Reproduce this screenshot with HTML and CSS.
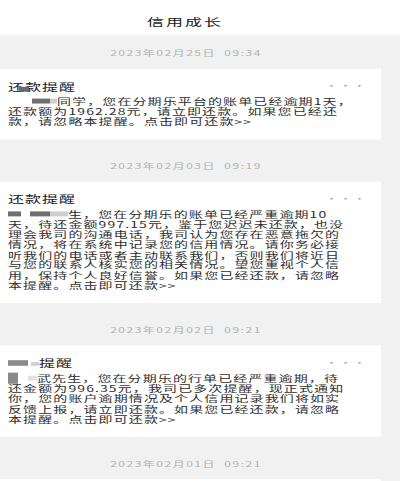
FILE: index.html
```html
<!DOCTYPE html>
<html lang="zh-CN">
<head>
<meta charset="utf-8">
<title>信用成长</title>
<link rel="stylesheet" href="styles.css">
</head>
<body>
<div class="page">
  <header class="topbar"><h1 class="topbar-title">信用成长</h1></header>

  <div class="stamp stamp-first">2023年02月25日&nbsp; 09:34</div>
  <section class="card">
    <div class="card-head">
      <h2 class="card-title">还款提醒<span class="mask mask-title"></span></h2>
      <span class="more">···</span>
    </div>
    <p class="card-body"><span class="blk blk-indent blk-dark w18"></span><span class="blk blk-light w7"></span>同学，您在分期乐平台的账单已经逾期1天，<br>还款额为1962.28元，请立即还款。如果您已经还<br>款，请忽略本提醒。点击即可还款&gt;&gt;</p>
  </section>

  <div class="stamp">2023年02月03日&nbsp; 09:19</div>
  <section class="card">
    <div class="card-head">
      <h2 class="card-title">还款提醒</h2>
      <span class="more">···</span>
    </div>
    <p class="card-body"><span class="blk blk-dark w13"></span><span class="blk blk-dark w20 gap9"></span><span class="blk blk-light w18"></span>生，您在分期乐的账单已经严重逾期10<br>天，待还金额997.15元，鉴于您迟迟未还款，也没<br>理会我司的沟通电话，我司认为您存在恶意拖欠的<br>情况，将在系统中记录您的信用情况。请你务必接<br>听我们的电话或者主动联系我们，否则我们将近日<br>与您的联系人核实您的相关情况。望您重视个人信<br>用，保持个人良好信誉。如果您已经还款，请忽略<br>本提醒。点击即可还款&gt;&gt;</p>
  </section>

  <div class="stamp">2023年02月02日&nbsp; 09:21</div>
  <section class="card">
    <div class="card-head">
      <h2 class="card-title"><span class="blk blk-mid w20 h9"></span><span class="blk blk-light w8 gap3 h6"></span>提醒</h2>
      <span class="more">···</span>
    </div>
    <p class="card-body"><span class="blk blk-mid w10 tall"></span><span class="blk blk-pale w9 gap10"></span>武先生，您在分期乐的行单已经严重逾期，待<br>还金额为996.35元，我司已多次提醒，现正式通知<br>你，您的账户逾期情况及个人信用记录我们将如实<br>反馈上报，请立即还款。如果您已经还款，请忽略<br>本提醒。点击即可还款&gt;&gt;</p>
  </section>

  <div class="stamp">2023年02月01日&nbsp; 09:21</div>
  <section class="card card-partial"></section>
</div>
</body>
</html>
```
FILE: styles.css
```css
html, body {
  margin: 0;
  padding: 0;
  height: 481px;
  overflow: hidden;
  background: #f1f1f1;
}

body {
  font-family: "Noto Sans CJK SC", "Noto Sans", sans-serif;
  color: #2b2b2b;
}

/* the reference is vertically compressed: lay out at natural size, then squash */
.page {
  width: 400px;
  transform: scaleY(0.62);
  transform-origin: 0 0;
}

.topbar {
  background: #ffffff;
  height: 56px;
  box-sizing: border-box;
  padding: 23px 30px 0 0;
  text-align: center;
}

.topbar-title {
  margin: 0;
  font-size: 17px;
  line-height: 24px;
  font-weight: 400;
  letter-spacing: 2px;
  color: #1c1c1c;
}

.stamp {
  padding: 33px 28px 15px 0;
  line-height: 20px;
  font-size: 12px;
  letter-spacing: 1.5px;
  color: #b2b2b2;
  text-align: center;
}

.stamp-first {
  padding-top: 19px;
  padding-bottom: 16px;
}

.card {
  background: #ffffff;
  margin-right: 19px;
  padding: 18px 14px 20px 8px;
}

.card-partial {
  height: 60px;
}

.card-head {
  display: flex;
  justify-content: space-between;
  align-items: center;
  height: 20px;
}

.card-title {
  position: relative;
  margin: 0;
  font-size: 16px;
  line-height: 20px;
  font-weight: 400;
  letter-spacing: 1px;
  color: #202020;
}

.more {
  font-size: 13px;
  letter-spacing: 1px;
  color: #a8a8a8;
  line-height: 20px;
}

.card-body {
  margin: 6px 0 0 0;
  font-size: 14px;
  line-height: 16.5px;
  letter-spacing: 1.1px;
  white-space: nowrap;
  color: #2e2e2e;
}

/* privacy blocks covering names */
.blk {
  display: inline-block;
  height: 8px;
  vertical-align: 2px;
}

.blk-dark { background: #6f6f6f; }
.blk-mid { background: #8a8a8a; }
.blk-light { background: #cfcfcf; }
.blk-pale { background: #e2e2e2; }

.blk-indent { margin-left: 24px; }
.gap3 { margin-left: 3px; }
.gap9 { margin-left: 9px; }
.gap10 { margin-left: 10px; }

.w7 { width: 7px; }
.w8 { width: 8px; }
.w9 { width: 9px; }
.w10 { width: 10px; }
.w13 { width: 13px; }
.w18 { width: 18px; }
.w20 { width: 20px; }

.h6 { height: 6px; }
.h9 { height: 9px; }

.tall {
  height: 18px;
  vertical-align: -3px;
}

.mask {
  position: absolute;
  background: #6a6a6a;
}

.mask-title {
  left: 11px;
  top: 11px;
  width: 10px;
  height: 8px;
}
```
